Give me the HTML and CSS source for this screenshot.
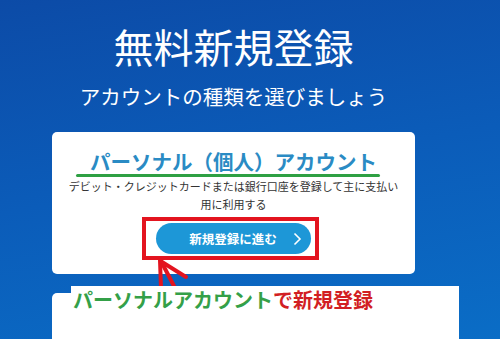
FILE: index.html
```html
<!DOCTYPE html>
<html lang="ja">
<head>
<meta charset="utf-8">
<link rel="stylesheet" href="styles.css">
</head>
<body>
<div class="page">
  <h1 class="title">無料新規登録</h1>
  <p class="subtitle">アカウントの種類を選びましょう</p>
  <div class="card">
    <h2 class="card-title">パーソナル（個人）アカウント</h2>
    <div class="underline"></div>
    <p class="desc">デビット・クレジットカードまたは銀行口座を登録して主に支払い用に利用する</p>
    <div class="btn-wrap">
      <a class="btn">新規登録に進む<span class="chev"><svg width="9" height="14" viewBox="0 0 9 14"><path d="M1.5 1.5 L7 7 L1.5 12.5" fill="none" stroke="#fff" stroke-width="1.6"/></svg></span></a>
      <div class="redbox"></div>
      <svg class="arrow" width="40" height="34" viewBox="0 0 40 34"><g stroke="#e3141f" stroke-width="4" fill="none" stroke-linecap="round"><path d="M4 3 L5 31"/><path d="M5 4 L19 31"/><path d="M6 5 L30 20"/></g></svg>
    </div>
  </div>
  <div class="card2"></div>
</div>
<div class="note"><span class="green">パーソナルアカウント</span><span class="red">で新規登録</span></div>
</body>
</html>
```
FILE: styles.css
```css
html, body {
  margin: 0;
  padding: 0;
}
body {
  width: 500px;
  height: 339px;
  overflow: hidden;
  position: relative;
  background: linear-gradient(170deg, #0c4ba7 0%, #0b5cb9 50%, #0a6dc6 100%);
  font-family: "Noto Sans CJK JP", "Noto Sans", sans-serif;
}
.page {
  width: 363px;
  margin-left: 52px;
  display: flex;
  flex-direction: column;
  align-items: center;
}
.title {
  margin: 22px 0 0;
  font-size: 40px;
  line-height: 48px;
  font-weight: 400;
  color: #fff;
  white-space: nowrap;
}
.subtitle {
  margin: 14px 0 0;
  font-size: 20.5px;
  line-height: 24px;
  color: #fff;
  white-space: nowrap;
}
.card {
  margin-top: 24px;
  width: 363px;
  height: 142px;
  box-sizing: border-box;
  background: #fff;
  border-radius: 5px;
  padding-top: 16px;
  display: flex;
  flex-direction: column;
  align-items: center;
}
.card-title {
  margin: 0;
  font-size: 20.5px;
  line-height: 26px;
  font-weight: 700;
  color: #2a8bc4;
  white-space: nowrap;
}
.underline {
  align-self: flex-start;
  margin-left: 24px;
  width: 304px;
  height: 3px;
  border-radius: 2px;
  background: #2ea043;
}
.desc {
  margin: 0;
  width: 336px;
  font-size: 11px;
  line-height: 18px;
  color: #333;
  text-align: center;
}
.btn-wrap {
  position: relative;
  margin-top: 10px;
}
.btn {
  display: flex;
  align-items: center;
  justify-content: center;
  width: 155px;
  height: 31px;
  border-radius: 16px;
  background: #1d97d7;
  color: #fff;
  font-size: 12.5px;
  font-weight: 700;
  box-sizing: border-box;
  padding-left: 24px;
}
.chev {
  display: flex;
  margin-left: 16px;
}
.redbox {
  position: absolute;
  left: -14px;
  right: -8px;
  top: -6px;
  bottom: -6px;
  border: 4px solid #e3141f;
}
.arrow {
  position: absolute;
  left: 0;
  top: 34px;
}
.card2 {
  margin-top: 19px;
  width: 363px;
  height: 60px;
  background: #fff;
  border-radius: 5px 5px 0 0;
}
.note {
  position: absolute;
  left: 71px;
  top: 286px;
  width: 388px;
  height: 53px;
  background: #fff;
  box-sizing: border-box;
  padding-left: 2px;
  font-size: 20px;
  line-height: 28px;
  font-weight: 700;
  white-space: nowrap;
}
.green { color: #34a048; }
.red { color: #d21f23; }
```
